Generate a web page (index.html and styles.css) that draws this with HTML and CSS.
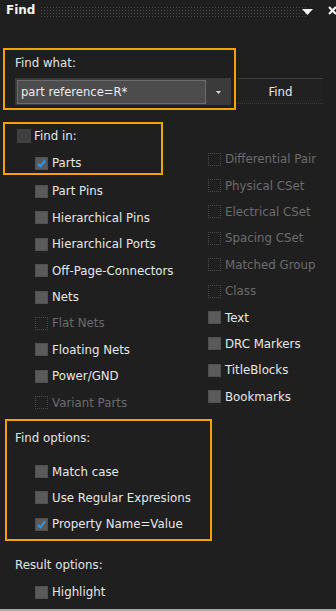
FILE: index.html
```html
<!DOCTYPE html>
<html>
<head>
<meta charset="utf-8">
<link rel="stylesheet" href="styles.css">
</head>
<body>
<div class="panel">
  <div class="titlebar">
    <span class="title">Find</span>
    <span class="grip"></span>
    <svg class="tb-icon tb-menu" width="11" height="6" viewBox="0 0 11 6"><polygon points="0,0 11,0 5.5,6" fill="#f2f2f2"/></svg>
    <svg class="tb-icon tb-close" width="9" height="9" viewBox="0 0 9 9"><path d="M1 1 L8 8 M8 1 L1 8" stroke="#f2f2f2" stroke-width="2.2"/></svg>
  </div>

  <div class="findwhat-row">
    <div class="hl-box box-what">
      <div class="label">Find what:</div>
      <div class="combo">
        <div class="combo-field">part reference=R*</div>
        <div class="combo-drop"><svg width="5" height="3" viewBox="0 0 5 3"><polygon points="0,0 5,0 2.5,3" fill="#dcdcdc"/></svg></div>
      </div>
    </div>
    <div class="find-btn">Find</div>
  </div>

  <div class="findin">
    <div class="col-left">
      <div class="hl-box box-in">
        <div class="row row-head"><span class="cb cb-mixed"></span><span class="txt">Find in:</span></div>
        <div class="row row-parts"><span class="cb checked"><svg width="13" height="13" viewBox="0 0 13 13"><path d="M3 7 L5.3 9.3 L10 3.5" stroke="#1e9cff" stroke-width="2" fill="none"/></svg></span><span class="txt">Parts</span></div>
      </div>
      <div class="list list-left">
        <div class="item"><span class="cb"></span><span class="txt">Part Pins</span></div>
        <div class="item"><span class="cb"></span><span class="txt">Hierarchical Pins</span></div>
        <div class="item"><span class="cb"></span><span class="txt">Hierarchical Ports</span></div>
        <div class="item"><span class="cb"></span><span class="txt">Off-Page-Connectors</span></div>
        <div class="item"><span class="cb"></span><span class="txt">Nets</span></div>
        <div class="item off"><span class="cb"></span><span class="txt">Flat Nets</span></div>
        <div class="item"><span class="cb"></span><span class="txt">Floating Nets</span></div>
        <div class="item"><span class="cb"></span><span class="txt">Power/GND</span></div>
        <div class="item off"><span class="cb"></span><span class="txt">Variant Parts</span></div>
      </div>
    </div>
    <div class="col-right">
      <div class="list list-right">
        <div class="item off"><span class="cb"></span><span class="txt">Differential Pair</span></div>
        <div class="item off"><span class="cb"></span><span class="txt">Physical CSet</span></div>
        <div class="item off"><span class="cb"></span><span class="txt">Electrical CSet</span></div>
        <div class="item off"><span class="cb"></span><span class="txt">Spacing CSet</span></div>
        <div class="item off"><span class="cb"></span><span class="txt">Matched Group</span></div>
        <div class="item off"><span class="cb"></span><span class="txt">Class</span></div>
        <div class="item"><span class="cb"></span><span class="txt">Text</span></div>
        <div class="item"><span class="cb"></span><span class="txt">DRC Markers</span></div>
        <div class="item"><span class="cb"></span><span class="txt">TitleBlocks</span></div>
        <div class="item"><span class="cb"></span><span class="txt">Bookmarks</span></div>
      </div>
    </div>
  </div>

  <div class="hl-box box-opts">
    <div class="label">Find options:</div>
    <div class="list list-opts">
      <div class="item"><span class="cb"></span><span class="txt">Match case</span></div>
      <div class="item"><span class="cb"></span><span class="txt">Use Regular Expresions</span></div>
      <div class="item"><span class="cb checked"><svg width="13" height="13" viewBox="0 0 13 13"><path d="M3 7 L5.3 9.3 L10 3.5" stroke="#1e9cff" stroke-width="2" fill="none"/></svg></span><span class="txt">Property Name=Value</span></div>
    </div>
  </div>

  <div class="result">
    <div class="label">Result options:</div>
    <div class="list list-result">
      <div class="item"><span class="cb"></span><span class="txt">Highlight</span></div>
    </div>
  </div>
</div>
</body>
</html>
```

FILE: styles.css
```css
* { box-sizing: border-box; }
html, body { margin: 0; padding: 0; background: #1f1f1f; }
body {
  font-family: "DejaVu Sans", Verdana, sans-serif;
  font-size: 11.8px;
  color: #e8e8e8;
}
.panel {
  width: 336px;
  height: 611px;
  overflow: hidden;
  background: #1f1f1f;
  border-bottom: 2px solid #a8a8a8;
}
.titlebar {
  height: 20px;
  display: flex;
  align-items: center;
  padding-left: 6px;
}
.title {
  font-weight: bold;
  font-size: 12px;
  color: #f4f4f4;
}
.grip {
  flex: 1;
  height: 13px;
  margin: 4px 6px 0 5px;
  background-image: radial-gradient(circle, #4a4a4a 0.7px, transparent 0.9px);
  background-size: 3px 3px;
}
.tb-icon { display: block; flex: none; }
.tb-menu { margin: 3px 0 0 -10px; }
.tb-close { margin: 0 -1px 0 15px; }

.findwhat-row {
  display: flex;
  align-items: flex-start;
  margin-top: 28px;
  padding-left: 3px;
}
.hl-box { border: 2px solid #f2a20c; }
.box-what {
  width: 233px;
  padding: 5px 3px 3px 10px;
}
.label { height: 16px; line-height: 16px; color: #e4e4e4; }
.box-what .label { margin-bottom: 7px; }
.combo {
  display: flex;
  height: 27px;
  background: #3b3b3b;
}
.combo-field {
  flex: 1;
  margin: 2px 0 1px 2px;
  background: #4c4c4c;
  border: 1px solid #6c6c6c;
  padding-left: 3px;
  line-height: 22px;
  color: #ececec;
  font-size: 11.6px;
}
.combo-drop {
  width: 25px;
  display: flex;
  align-items: center;
  justify-content: center;
  padding-top: 1px;
}
.combo-drop svg { display: block; }
.find-btn {
  margin: 30px 0 0 2px;
  width: 85px;
  height: 26px;
  padding-top: 2px;
  border-top: 1px solid #3e3e3e;
  border-bottom: 1px dotted #3a3a3a;
  background: #212121;
  display: flex;
  align-items: center;
  justify-content: center;
  color: #e6e6e6;
}

.findin {
  display: grid;
  grid-template-columns: 207px 1fr;
  margin-top: 12px;
}
.box-in {
  margin-left: 3px;
  width: 160px;
  height: 53px;
  padding-left: 12px;
}
.row { display: flex; align-items: center; }
.row-head { height: 23px; }
.row-parts { height: 20px; margin-top: 6px; padding-left: 18px; }
.txt { white-space: nowrap; }
.cb {
  flex: none;
  width: 13px;
  height: 13px;
  margin-right: 4px;
  background: #5a5a5a;
  box-shadow: inset 0 0 0 1px #505050;
  display: block;
}
.cb svg { display: block; }
.cb.cb-mixed {
  width: 14px;
  height: 14px;
  margin-right: 3px;
  background-color: #2c2c2c;
  background-image: radial-gradient(circle, #555 0.6px, transparent 0.8px);
  background-size: 2px 2px;
  box-shadow: inset 0 0 0 1px #444;
}
.item {
  height: 26.4px;
  display: flex;
  align-items: center;
}
.item.off .txt { color: #6c6c6c; }
.item.off .cb {
  background: transparent;
  box-shadow: none;
  border: 1px dotted #4a4a4a;
}
.list-left { margin-top: 3.3px; padding-left: 35px; }
.list-right { padding-top: 24px; padding-left: 1px; }

.box-opts {
  margin: 3.4px 0 0 5px;
  width: 207px;
  padding: 8.4px 0 1px 8px;
}
.list-opts { margin-top: 12.8px; padding-left: 20px; }

.result { padding-left: 15px; margin-top: 16px; }
.list-result { margin-top: 6.5px; padding-left: 20px; }
```
